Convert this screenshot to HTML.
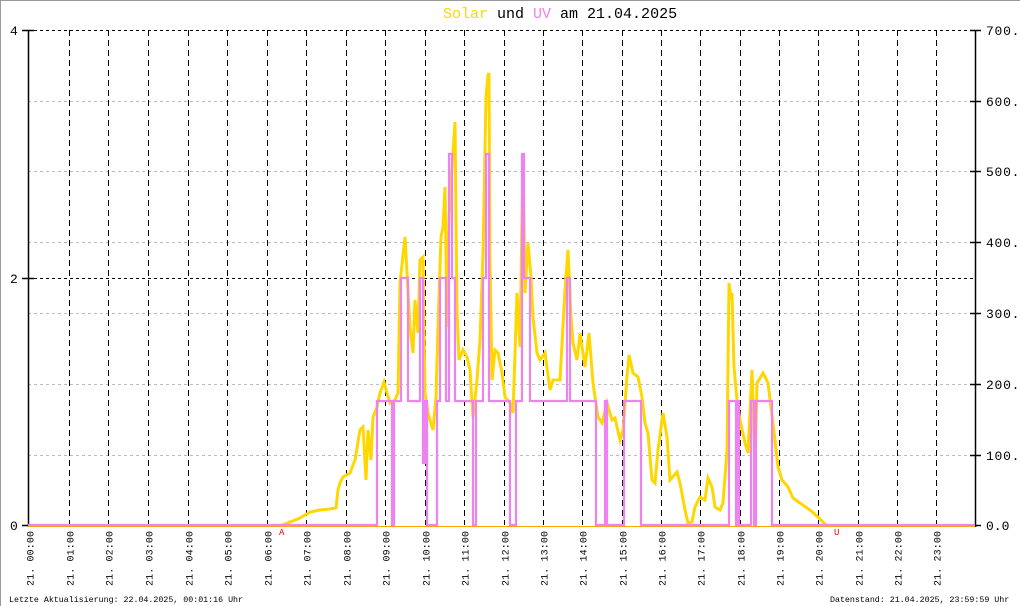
<!DOCTYPE html>
<html><head><meta charset="utf-8"><style>
html,body{margin:0;padding:0;background:#fff;}
svg{display:block;}
text{font-family:"Liberation Mono",monospace;}
</style></head><body>
<svg width="1020" height="606" viewBox="0 0 1020 606" xmlns="http://www.w3.org/2000/svg">
<rect x="0" y="0" width="1020" height="606" fill="#fff"/>
<line x1="0" y1="0.5" x2="1020" y2="0.5" stroke="#999" stroke-width="1"/>
<line x1="0.5" y1="0" x2="0.5" y2="606" stroke="#999" stroke-width="1"/>
<text x="443" y="18" font-size="15"><tspan fill="#ffd700">Solar</tspan> und <tspan fill="#ee82ee">UV</tspan> am 21.04.2025</text>
<g stroke="#bbb" stroke-width="1" stroke-dasharray="3,3">
<line x1="28" y1="101.5" x2="975" y2="101.5"/>
<line x1="28" y1="171.5" x2="975" y2="171.5"/>
<line x1="28" y1="242.5" x2="975" y2="242.5"/>
<line x1="28" y1="313.5" x2="975" y2="313.5"/>
<line x1="28" y1="384.5" x2="975" y2="384.5"/>
<line x1="28" y1="455.5" x2="975" y2="455.5"/>
</g>
<g stroke="#000" stroke-width="1" stroke-dasharray="3,3">
<line x1="28" y1="30.5" x2="975" y2="30.5"/>
<line x1="28" y1="278.5" x2="975" y2="278.5"/>
</g>
<g stroke="#000" stroke-width="1" stroke-dasharray="6,4">
<line x1="69.5" y1="30" x2="69.5" y2="525"/>
<line x1="108.5" y1="30" x2="108.5" y2="525"/>
<line x1="148.5" y1="30" x2="148.5" y2="525"/>
<line x1="188.5" y1="30" x2="188.5" y2="525"/>
<line x1="227.5" y1="30" x2="227.5" y2="525"/>
<line x1="267.5" y1="30" x2="267.5" y2="525"/>
<line x1="306.5" y1="30" x2="306.5" y2="525"/>
<line x1="346.5" y1="30" x2="346.5" y2="525"/>
<line x1="385.5" y1="30" x2="385.5" y2="525"/>
<line x1="425.5" y1="30" x2="425.5" y2="525"/>
<line x1="464.5" y1="30" x2="464.5" y2="525"/>
<line x1="504.5" y1="30" x2="504.5" y2="525"/>
<line x1="543.5" y1="30" x2="543.5" y2="525"/>
<line x1="582.5" y1="30" x2="582.5" y2="525"/>
<line x1="622.5" y1="30" x2="622.5" y2="525"/>
<line x1="661.5" y1="30" x2="661.5" y2="525"/>
<line x1="700.5" y1="30" x2="700.5" y2="525"/>
<line x1="740.5" y1="30" x2="740.5" y2="525"/>
<line x1="779.5" y1="30" x2="779.5" y2="525"/>
<line x1="818.5" y1="30" x2="818.5" y2="525"/>
<line x1="858.5" y1="30" x2="858.5" y2="525"/>
<line x1="897.5" y1="30" x2="897.5" y2="525"/>
<line x1="936.5" y1="30" x2="936.5" y2="525"/>
</g>
<g stroke="#000" stroke-width="1.5">
<line x1="28.5" y1="30" x2="28.5" y2="527"/>
<line x1="975.5" y1="30" x2="975.5" y2="527"/>
<line x1="22" y1="30.5" x2="34" y2="30.5"/>
<line x1="22" y1="278.5" x2="34" y2="278.5"/>
<line x1="22" y1="525.5" x2="34" y2="525.5"/>
<line x1="970" y1="30.5" x2="981" y2="30.5"/>
<line x1="970" y1="101.5" x2="981" y2="101.5"/>
<line x1="970" y1="171.5" x2="981" y2="171.5"/>
<line x1="970" y1="242.5" x2="981" y2="242.5"/>
<line x1="970" y1="313.5" x2="981" y2="313.5"/>
<line x1="970" y1="384.5" x2="981" y2="384.5"/>
<line x1="970" y1="455.5" x2="981" y2="455.5"/>
<line x1="970" y1="525.5" x2="981" y2="525.5"/>
</g>
<line x1="28" y1="526.5" x2="975" y2="526.5" stroke="#ffa500" stroke-width="1"/>
<g font-size="13" fill="#000">
<text x="10" y="35">4</text><text x="10" y="283">2</text><text x="10" y="530">0</text>
<text x="986" y="35" textLength="42">700.0</text><text x="986" y="106" textLength="42">600.0</text><text x="986" y="176" textLength="42">500.0</text>
<text x="986" y="247" textLength="42">400.0</text><text x="986" y="318" textLength="42">300.0</text><text x="986" y="389" textLength="42">200.0</text>
<text x="986" y="460" textLength="42">100.0</text><text x="986" y="530">0.0</text>
</g>
<polyline fill="none" stroke="#ffd700" stroke-width="3" stroke-linejoin="miter" points="282,525 290,522 300,518 310,512 320,510 330,509 336,508 338,490 340,483 343,477 350,473 355,460 360,430 363,427 366,480 368,430 371,460 373,417 377,407 380,393 384,382 387,393 390,403 395,400 398,393 400,283 405,237 407,273 410,327 413,353 415,300 418,333 420,260 423,257 425,393 428,413 433,430 436,397 438,327 441,237 443,227 445,187 447,327 449,217 452,167 455,122 457,310 459,360 463,350 467,357 470,370 473,417 477,380 480,340 483,253 486,97 488,75 489,73 490,260 492,380 495,350 498,353 502,373 505,397 510,403 513,413 517,293 520,347 523,157 525,293 528,243 531,277 533,317 537,353 540,360 545,353 550,390 553,380 560,380 565,290 568,250 571,317 573,343 577,360 580,333 585,367 589,333 593,383 598,417 602,423 607,403 612,420 615,418 620,440 623,430 627,377 629,355 633,373 638,377 642,397 645,423 648,433 652,480 655,483 658,450 663,413 667,437 670,480 677,472 680,483 685,510 688,523 692,522 695,507 700,497 705,500 708,478 712,487 715,507 720,510 723,503 727,450 729,283 731,300 732,293 734,367 737,400 740,420 745,443 748,453 752,370 755,470 757,383 763,373 768,383 773,423 778,467 782,480 788,487 793,498 800,503 810,510 818,517 826,525"/>
<polyline fill="none" stroke="#ee82ee" stroke-width="2.2" points="28,525 377,525 377,401 392,401 392,525 394,525 394,401 401,401 401,278 408,278 408,401 420,401 420,278 423,278 423,463 425,463 425,401 427,401 427,525 437,525 437,401 440,401 440,278 446,278 446,401 449,401 449,154 452,154 452,278 455,278 455,401 473,401 473,525 476,525 476,401 483,401 483,278 486,278 486,154 489,154 489,401 510,401 510,525 516,525 516,401 522,401 522,154 524,154 524,278 530,278 530,401 567,401 567,278 570,278 570,401 596,401 596,525 605,525 605,401 607,401 607,525 624,525 624,401 641,401 641,525 729,525 729,401 736,401 736,525 738,525 738,401 739,401 739,525 751,525 751,401 754,401 754,525 756,525 756,401 772,401 772,525 975,525"/>
<text x="279" y="535" font-size="9" fill="#e00">A</text>
<text x="834" y="535" font-size="9" fill="#e00">U</text>
<g font-size="10" fill="#000">
<text transform="translate(33.5,586) rotate(-90)" textLength="55">21. 00:00</text>
<text transform="translate(73.5,586) rotate(-90)" textLength="55">21. 01:00</text>
<text transform="translate(112.5,586) rotate(-90)" textLength="55">21. 02:00</text>
<text transform="translate(152.5,586) rotate(-90)" textLength="55">21. 03:00</text>
<text transform="translate(192.5,586) rotate(-90)" textLength="55">21. 04:00</text>
<text transform="translate(231.5,586) rotate(-90)" textLength="55">21. 05:00</text>
<text transform="translate(271.5,586) rotate(-90)" textLength="55">21. 06:00</text>
<text transform="translate(310.5,586) rotate(-90)" textLength="55">21. 07:00</text>
<text transform="translate(350.5,586) rotate(-90)" textLength="55">21. 08:00</text>
<text transform="translate(389.5,586) rotate(-90)" textLength="55">21. 09:00</text>
<text transform="translate(429.5,586) rotate(-90)" textLength="55">21. 10:00</text>
<text transform="translate(468.5,586) rotate(-90)" textLength="55">21. 11:00</text>
<text transform="translate(508.5,586) rotate(-90)" textLength="55">21. 12:00</text>
<text transform="translate(547.5,586) rotate(-90)" textLength="55">21. 13:00</text>
<text transform="translate(586.5,586) rotate(-90)" textLength="55">21. 14:00</text>
<text transform="translate(626.5,586) rotate(-90)" textLength="55">21. 15:00</text>
<text transform="translate(665.5,586) rotate(-90)" textLength="55">21. 16:00</text>
<text transform="translate(704.5,586) rotate(-90)" textLength="55">21. 17:00</text>
<text transform="translate(744.5,586) rotate(-90)" textLength="55">21. 18:00</text>
<text transform="translate(783.5,586) rotate(-90)" textLength="55">21. 19:00</text>
<text transform="translate(822.5,586) rotate(-90)" textLength="55">21. 20:00</text>
<text transform="translate(862.5,586) rotate(-90)" textLength="55">21. 21:00</text>
<text transform="translate(901.5,586) rotate(-90)" textLength="55">21. 22:00</text>
<text transform="translate(940.5,586) rotate(-90)" textLength="55">21. 23:00</text>
</g>
<text x="9" y="602" font-size="8.3" fill="#000">Letzte Aktualisierung: 22.04.2025, 00:01:16 Uhr</text>
<text x="830" y="602" font-size="8.3" fill="#000">Datenstand: 21.04.2025, 23:59:59 Uhr</text>
</svg>
</body></html>
